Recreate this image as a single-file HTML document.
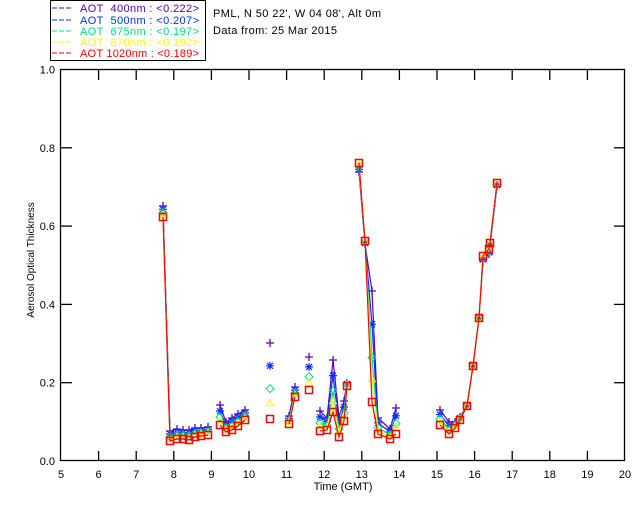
<!DOCTYPE html>
<html><head><meta charset="utf-8"><style>
html,body{margin:0;padding:0;background:#fff;width:640px;height:512px;overflow:hidden}
svg{display:block;font-family:"Liberation Sans",sans-serif}
</style></head><body>
<svg id="s" width="640" height="512" xmlns="http://www.w3.org/2000/svg">
<rect x="50.5" y="0.5" width="155" height="60" fill="none" stroke="#000" stroke-width="1"/>
<g font-size="11">
<line x1="52" y1="8" x2="73" y2="8" stroke="#6000b0" stroke-dasharray="5,2"/>
<text x="80" y="12" fill="#6000b0" xml:space="preserve" textLength="119" lengthAdjust="spacing">AOT  400nm : &lt;0.222&gt;</text>
<line x1="52" y1="20" x2="73" y2="20" stroke="#0030ff" stroke-dasharray="5,2"/>
<text x="80" y="24" fill="#0030ff" xml:space="preserve" textLength="119" lengthAdjust="spacing">AOT  500nm : &lt;0.207&gt;</text>
<line x1="52" y1="31" x2="73" y2="31" stroke="#00e080" stroke-dasharray="5,2"/>
<text x="80" y="35" fill="#00e080" xml:space="preserve" textLength="119" lengthAdjust="spacing">AOT  675nm : &lt;0.197&gt;</text>
<line x1="52" y1="42" x2="73" y2="42" stroke="#ffff00" stroke-dasharray="5,2"/>
<text x="80" y="46" fill="#ffff00" xml:space="preserve" textLength="119" lengthAdjust="spacing">AOT  870nm : &lt;0.192&gt;</text>
<line x1="52" y1="53" x2="73" y2="53" stroke="#ff0000" stroke-dasharray="5,2"/>
<text x="80" y="57" fill="#ff0000" xml:space="preserve" textLength="119" lengthAdjust="spacing">AOT 1020nm : &lt;0.189&gt;</text>
<text x="213" y="17" fill="#000" textLength="168" lengthAdjust="spacing">PML, N 50 22', W 04 08', Alt 0m</text>
<text x="213" y="34" fill="#000" textLength="124" lengthAdjust="spacing">Data from: 25 Mar 2015</text>
</g>
<rect x="60.5" y="69.5" width="564" height="391" fill="none" stroke="#000" stroke-width="1.3"/>
<g id="ax" stroke="#000" stroke-width="1.3"></g>
<g id="lab" font-size="11" fill="#000"></g>
<text x="343" y="490" font-size="11" text-anchor="middle">Time (GMT)</text>
<text transform="translate(34,260) rotate(-90)" font-size="10" text-anchor="middle">Aerosol Optical Thickness</text>
<g id="d" fill="none"></g>
</svg>
<script>
var ns="http://www.w3.org/2000/svg";
function el(p,t,a,txt){var e=document.createElementNS(ns,t);for(var k in a)e.setAttribute(k,a[k]);if(txt!=null)e.textContent=txt;document.getElementById(p).appendChild(e);return e;}
for(var h=5;h<=20;h++){var x=61+(h-5)*37.6;
 if(h>5&&h<20){el("ax","line",{x1:x,y1:461,x2:x,y2:451});el("ax","line",{x1:x,y1:70,x2:x,y2:80});}
 el("lab","text",{x:x,y:478,"text-anchor":"middle"},String(h));}
for(var i=0;i<=5;i++){var y=461-i*78.3;
 if(i>0&&i<5){el("ax","line",{x1:61,y1:y,x2:72,y2:y});el("ax","line",{x1:625,y1:y,x2:614,y2:y});}
 el("lab","text",{x:55,y:y+4,"text-anchor":"end"},(i*0.2).toFixed(1));}
var segs=[
[[163,217,11],[170,441,10],[177,439,10],[183,439,9],[189,440,10],[195,437,9],[201,436,8],[208,435,8]],
[[220,425,20],[226,432,10],[232,430,12],[238,426,12],[245,420,10]],
[[270,419,76]],
[[289,424,8],[295,397,10]],
[[309,390,33]],
[[320,431,20],[327,430,12],[333,412,52],[339,437,20],[344,421,20],[347,386,3]],
[[359,163,-9],[365,241,-3],[372,402,111],[378,434,16],[390,439,10],[396,434,26]],
[[440,425,15],[449,434,12],[455,428,6],[460,420,3],[467,406,0],[473,366,0],[479,318,0],[483,256,-5],[489,249,-5],[490,243,-3],[497,183,-3]]];
var cols=["#6000b0","#0030ff","#00e080","#ffff00","#ff0000"],f=[1,0.7,0.4,0.2,0];
for(var c=0;c<5;c++){segs.forEach(function(s){
 var pts=s.map(function(p){return p[0]+","+(p[1]-p[2]*f[c]);}).join(" ");
 if(s.length>1)el("d","polyline",{points:pts,stroke:cols[c],"stroke-width":1.2});
 s.forEach(function(p){var x=p[0],y=p[1]-p[2]*f[c],col=cols[c];
  if(c==0){el("d","path",{d:"M"+(x-4)+","+y+"h8M"+x+","+(y-4)+"v8",stroke:col,"stroke-width":1.3});}
  else if(c==1){el("d","path",{d:"M"+(x-4)+","+y+"h8M"+x+","+(y-4)+"v8M"+(x-3)+","+(y-3)+"l6,6M"+(x+3)+","+(y-3)+"l-6,6",stroke:col,"stroke-width":1.2});}
  else if(c==2){el("d","path",{d:"M"+x+","+(y-4)+"l4,4l-4,4l-4,-4z",stroke:col,"stroke-width":1});}
  else if(c==3){el("d","path",{d:"M"+x+","+(y-4)+"l3.5,6h-7z",stroke:col,"stroke-width":1});}
  else {el("d","rect",{x:x-3.5,y:y-3.5,width:7,height:7,stroke:col,"stroke-width":1.5});}
 });});}
</script>
</body></html>
